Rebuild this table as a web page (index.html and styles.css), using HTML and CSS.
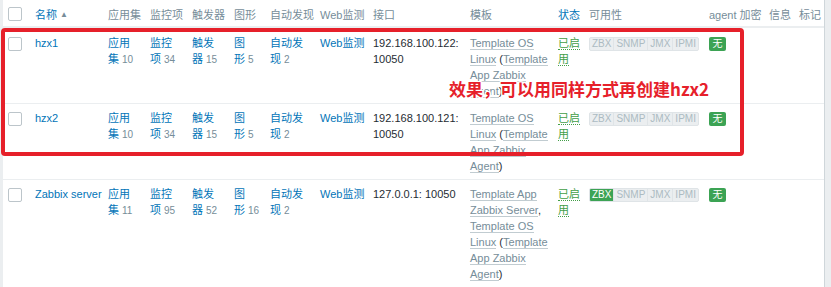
FILE: index.html
```html
<!DOCTYPE html>
<html lang="zh-CN">
<head>
<meta charset="utf-8">
<title>主机</title>
<link rel="stylesheet" href="styles.css">
</head>
<body>
<div class="screen">
  <div class="page">
    <table class="list">
      <colgroup>
        <col class="w-chk"><col class="w-name"><col class="w-app"><col class="w-item"><col class="w-trig"><col class="w-graph"><col class="w-disc"><col class="w-web"><col class="w-iface"><col class="w-tpl"><col class="w-status"><col class="w-avail"><col class="w-enc"><col class="w-info"><col class="w-tags">
      </colgroup>
      <thead>
        <tr>
          <th><span class="chk"></span></th>
          <th><a class="hlink">名称</a><span class="arrow">▲</span></th>
          <th>应用集</th>
          <th>监控项</th>
          <th>触发器</th>
          <th>图形</th>
          <th>自动发现</th>
          <th>Web监测</th>
          <th>接口</th>
          <th>模板</th>
          <th><a class="hlink">状态</a></th>
          <th>可用性</th>
          <th>agent 加密</th>
          <th>信息</th>
          <th>标记</th>
        </tr>
      </thead>
      <tbody>
        <tr>
          <td><span class="chk"></span></td>
          <td><a class="link">hzx1</a></td>
          <td><a class="link">应用集</a><span class="cnt">&#8288;10</span></td>
          <td><a class="link">监控项</a><span class="cnt">&#8288;34</span></td>
          <td><a class="link">触发器</a><span class="cnt">&#8288;15</span></td>
          <td><a class="link">图形</a><span class="cnt">&#8288;5</span></td>
          <td><a class="link">自动发现</a><span class="cnt">&#8288;2</span></td>
          <td><a class="link">Web监测</a></td>
          <td>192.168.100.122: 10050</td>
          <td><a class="tlink">Template OS Linux</a> (<a class="tlink">Template App Zabbix Agent</a>)</td>
          <td><a class="status">已启用</a></td>
          <td><span class="avail"><span class="b">ZBX</span><span class="b">SNMP</span><span class="b">JMX</span><span class="b">IPMI</span></span></td>
          <td><span class="none">无</span></td>
          <td></td>
          <td></td>
        </tr>
        <tr>
          <td><span class="chk"></span></td>
          <td><a class="link">hzx2</a></td>
          <td><a class="link">应用集</a><span class="cnt">&#8288;10</span></td>
          <td><a class="link">监控项</a><span class="cnt">&#8288;34</span></td>
          <td><a class="link">触发器</a><span class="cnt">&#8288;15</span></td>
          <td><a class="link">图形</a><span class="cnt">&#8288;5</span></td>
          <td><a class="link">自动发现</a><span class="cnt">&#8288;2</span></td>
          <td><a class="link">Web监测</a></td>
          <td>192.168.100.121: 10050</td>
          <td><a class="tlink">Template OS Linux</a> (<a class="tlink">Template App Zabbix Agent</a>)</td>
          <td><a class="status">已启用</a></td>
          <td><span class="avail"><span class="b">ZBX</span><span class="b">SNMP</span><span class="b">JMX</span><span class="b">IPMI</span></span></td>
          <td><span class="none">无</span></td>
          <td></td>
          <td></td>
        </tr>
        <tr>
          <td><span class="chk"></span></td>
          <td><a class="link">Zabbix server</a></td>
          <td><a class="link">应用集</a><span class="cnt">&#8288;11</span></td>
          <td><a class="link">监控项</a><span class="cnt">&#8288;95</span></td>
          <td><a class="link">触发器</a><span class="cnt">&#8288;52</span></td>
          <td><a class="link">图形</a><span class="cnt">&#8288;16</span></td>
          <td><a class="link">自动发现</a><span class="cnt">&#8288;2</span></td>
          <td><a class="link">Web监测</a></td>
          <td>127.0.0.1: 10050</td>
          <td><a class="tlink">Template App Zabbix Server</a>, <a class="tlink">Template OS Linux</a> (<a class="tlink">Template App Zabbix Agent</a>)</td>
          <td><a class="status">已启用</a></td>
          <td><span class="avail"><span class="b on">ZBX</span><span class="b">SNMP</span><span class="b">JMX</span><span class="b">IPMI</span></span></td>
          <td><span class="none">无</span></td>
          <td></td>
          <td></td>
        </tr>
      </tbody>
    </table>
  </div>
  <div class="annot-box"></div>
  <div class="annot-text">效果，可以用同样方式再创建hzx2</div>
</div>
</body>
</html>
```
FILE: styles.css
```css
* { box-sizing: border-box; }
html, body { margin: 0; padding: 0; }
body {
  background: #ebeef0;
  font-family: "Liberation Sans", "Noto Sans CJK SC", sans-serif;
  font-size: 11px;
  line-height: 16px;
  color: #1f2c33;
  overflow: hidden;
}
.screen { position: relative; width: 831px; height: 287px; }
.page {
  margin-left: 3px;
  width: 822px;
  height: 287px;
  background: #fff;
  border-right: 1px solid #cfd6da;
}
.list { width: 821px; table-layout: fixed; border-collapse: collapse; border-spacing: 0; }
.w-chk { width: 32px; } .w-name { width: 73px; } .w-app { width: 42px; } .w-item { width: 42px; }
.w-trig { width: 42px; } .w-graph { width: 36px; } .w-disc { width: 50px; } .w-web { width: 53px; }
.w-iface { width: 97px; } .w-tpl { width: 88px; } .w-status { width: 31px; } .w-avail { width: 120px; }
.w-enc { width: 60px; } .w-info { width: 30px; } .w-tags { width: 25px; }

.list th {
  text-align: left;
  font-weight: normal;
  color: #768d99;
  padding: 7px 0 3px 0;
  white-space: nowrap;
  vertical-align: top;
  border-bottom: 2px solid #ebeef0;
}
.list td {
  padding: 6px 6px 5px 0;
  vertical-align: top;
  border-bottom: 1px solid #ebeef0;
}
.list tbody tr:first-child td { padding-top: 7px; padding-bottom: 4px; }
.list th:first-child, .list td:first-child { padding-left: 5px; }
.list td:nth-child(2) { padding-right: 4px; }
.list td:nth-child(3), .list td:nth-child(4), .list td:nth-child(5) { padding-right: 14px; }
.list td:nth-child(6) { padding-right: 15px; }
.list td:nth-child(7) { padding-right: 12px; }
.list td:nth-child(8) { padding-right: 4px; }
.list td:nth-child(9) { padding-right: 8px; }

.chk {
  display: inline-block;
  width: 14px;
  height: 14px;
  border: 1px solid #bcc5ca;
  border-radius: 2px;
  background: #fff;
  vertical-align: top;
}
.list td .chk { margin-top: 2px; }
.hlink { color: #0275b8; }
.arrow { color: #768d99; font-size: 8px; margin-left: 3px; vertical-align: top; }
.link { color: #0275b8; }
.cnt { color: #768d99; font-size: 10px; margin-left: 3px; white-space: nowrap; }
.tlink {
  color: #768d99;
  border-bottom: 1px solid rgba(118, 141, 153, 0.45);
}
.status {
  color: #429e47;
  border-bottom: 1px dotted #429e47;
}
.avail {
  display: inline-flex;
  margin-top: 1px;
  border: 1px solid #dfe4e7;
  border-radius: 2px;
  background: #ebeef0;
}
.avail .b {
  font-size: 10px;
  line-height: 12px;
  color: #acbbc2;
  padding: 0 2px;
  border-right: 1px solid #dfe4e7;
}
.avail .b:last-child { border-right: 0; }
.avail .b.on { background: #3ca354; color: #fff; border-radius: 1px 0 0 1px; }
.none {
  display: inline-block;
  margin-top: 1px;
  width: 17px;
  height: 14px;
  line-height: 14px;
  text-align: center;
  background: #3ca354;
  color: #fff;
  font-size: 10px;
  border-radius: 2px;
}

.annot-box {
  position: absolute;
  left: 1px;
  top: 28px;
  width: 743px;
  height: 128px;
  border: 4px solid #e6202a;
  border-radius: 4px;
}
.annot-text {
  position: absolute;
  left: 449px;
  top: 78px;
  font-family: "Noto Sans CJK SC", sans-serif;
  font-weight: bold;
  font-size: 17px;
  line-height: 22px;
  color: #e6202a;
  white-space: nowrap;
  text-shadow: 1px 0 #fff, -1px 0 #fff, 0 1px #fff, 0 -1px #fff, 1px 1px #fff, -1px -1px #fff, 1px -1px #fff, -1px 1px #fff;
}
```
